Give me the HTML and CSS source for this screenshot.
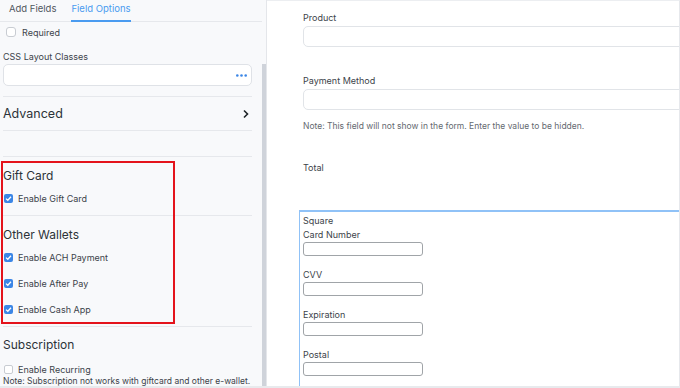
FILE: index.html
```html
<!DOCTYPE html>
<html lang="en">

<head>
    <meta charset="UTF-8">
    <meta name="viewport" content="width=device-width, initial-scale=1.0">
    <title>Field Options</title>
    <link rel="stylesheet" href="styles.css">
</head>

<body>
    <div class="editor">
        <!-- Sidebar -->
        <aside class="sidebar">
            <div class="sidebar-inner">
                <div class="tabs">
                    <span class="tab">Add Fields</span>
                    <span class="tab active">Field Options</span>
                </div>

                <label class="check-row required-row">
                    <span class="box"></span> Required
                </label>

                <div class="field-label">CSS Layout Classes</div>
                <div class="text-input">
                    <svg class="dots" width="11" height="3" viewBox="0 0 11 3">
                        <circle cx="1.3" cy="1.5" r="1.3" fill="#3b86e6" />
                        <circle cx="5.5" cy="1.5" r="1.3" fill="#3b86e6" />
                        <circle cx="9.7" cy="1.5" r="1.3" fill="#3b86e6" />
                    </svg>
                </div>

                <div class="divider first"></div>
                <div class="advanced">
                    <span>Advanced</span>
                    <svg width="8" height="10" viewBox="0 0 8 10">
                        <path d="M2 1.5 L5.5 5 L2 8.5" fill="none" stroke="#1d2327" stroke-width="1.6" />
                    </svg>
                </div>
                <div class="divider"></div>
                <div class="spacer"></div>
                <div class="divider"></div>

                <section class="group">
                    <h3>Gift Card</h3>
                    <label class="check-row"><span class="box checked"></span> Enable Gift Card</label>
                </section>
                <div class="divider"></div>

                <section class="group">
                    <h3>Other Wallets</h3>
                    <label class="check-row"><span class="box checked"></span> Enable ACH Payment</label>
                    <label class="check-row"><span class="box checked"></span> Enable After Pay</label>
                    <label class="check-row"><span class="box checked"></span> Enable Cash App</label>
                </section>
                <div class="divider"></div>

                <section class="group sub">
                    <h3>Subscription</h3>
                    <label class="check-row recurring"><span class="box"></span> Enable Recurring</label>
                    <p class="note">Note: Subscription not works with giftcard and other e-wallet.</p>
                </section>

                <!-- highlight annotation -->
                <div class="highlight"></div>
            </div>
            <div class="scrollbar"><div class="thumb"></div></div>
        </aside>

        <!-- Form preview -->
        <main class="preview">
            <div class="form-field">
                <div class="form-label">Product</div>
                <div class="wide-input"></div>
            </div>
            <div class="form-field">
                <div class="form-label">Payment Method</div>
                <div class="wide-input"></div>
                <p class="form-note">Note: This field will not show in the form. Enter the value to be hidden.</p>
            </div>
            <div class="form-field total">
                <div class="form-label">Total</div>
            </div>

            <div class="square">
                <div class="form-label">Square</div>
                <div class="card-label first">Card Number</div>
                <div class="small-input"></div>
                <div class="card-label">CVV</div>
                <div class="small-input"></div>
                <div class="card-label">Expiration</div>
                <div class="small-input"></div>
                <div class="card-label">Postal</div>
                <div class="small-input"></div>
            </div>
        </main>
    </div>
    <div class="bottom-bar"></div>
</body>

</html>
```

FILE: styles.css
```css
/* General */
body {
    margin: 0;
    padding: 0;
    font-family: Inter, "Noto Sans", Arial, sans-serif;
    color: #3c434a;
    height: 388px;
    overflow: hidden;
    background: #fff;
}

.editor {
    display: flex;
    height: 386px;
}

/* Sidebar */
.sidebar {
    display: flex;
    width: 266px;
    flex-shrink: 0;
    background-color: #f8f9fb;
    border-right: 1px solid #e4e6ea;
}

.sidebar-inner {
    position: relative;
    flex: 1;
    padding: 0 10px 0 3px;
}

.scrollbar {
    width: 4px;
    padding-top: 64px;
}

.scrollbar .thumb {
    height: 100%;
    background-color: #cfd3da;
}

/* Tabs */
.tabs {
    display: flex;
    gap: 15px;
    height: 21px;
    margin: 0 -10px 0 -3px;
    padding-left: 9px;
    border-bottom: 1px solid #e6e8ec;
}

.tab {
    font-size: 9.5px;
    line-height: 13px;
    padding-top: 2px;
    color: #50575e;
}

.tab.active {
    color: #4a9bf0;
    border-bottom: 2px solid #4a9bf0;
    margin-bottom: -1px;
}

/* Checkboxes */
.check-row {
    display: flex;
    align-items: center;
    gap: 5px;
    height: 26px;
    font-size: 9px;
    color: #3c434a;
}

.box {
    width: 9px;
    height: 9px;
    border-radius: 2px;
    border: 1px solid #c8ccd2;
    background: #fff;
    box-sizing: border-box;
    margin-left: 1px;
    flex-shrink: 0;
}

.box.checked {
    border: none;
    background: #3b86e6 url("data:image/svg+xml,%3Csvg xmlns='http://www.w3.org/2000/svg' viewBox='0 0 9 9'%3E%3Cpath d='M2 4.6 L3.8 6.3 L7 2.8' fill='none' stroke='white' stroke-width='1.3'/%3E%3C/svg%3E") center / 9px 9px no-repeat;
}

.required-row {
    height: 20px;
    padding-left: 2px;
    gap: 6px;
}

.required-row .box {
    width: 10px;
    height: 10px;
    border-radius: 3px;
}

/* CSS classes input */
.field-label {
    font-size: 9px;
    line-height: 12px;
    padding-top: 9px;
    height: 13px;
}

.text-input {
    height: 22px;
    box-sizing: border-box;
    border: 1px solid #dfe2e7;
    border-radius: 5px;
    background: #fff;
    display: flex;
    align-items: center;
    justify-content: flex-end;
    padding-right: 4px;
}

.divider {
    height: 1px;
    background-color: #e6e8ec;
}

.divider.first {
    margin-top: 10px;
}

.advanced {
    display: flex;
    align-items: center;
    justify-content: space-between;
    height: 33px;
    padding-right: 2px;
    font-size: 12.5px;
    color: #2c3338;
}

.spacer {
    height: 25px;
}

/* Groups */
.group {
    padding: 6px 0 4px;
}

.group h3 {
    margin: 0;
    height: 22px;
    line-height: 26px;
    font-size: 12px;
    font-weight: 400;
    color: #2c3338;
}

.group.sub {
    padding-top: 5px;
}

.group .recurring {
    height: 14px;
    margin-top: 8px;
}

.note {
    margin: 0;
    font-size: 8.5px;
    line-height: 11px;
    color: #3c434a;
    white-space: nowrap;
}

/* Red annotation box */
.highlight {
    position: absolute;
    left: 1px;
    top: 161px;
    width: 174px;
    height: 163px;
    box-sizing: border-box;
    border: 2px solid #e4131b;
}

/* Preview */
.preview {
    flex: 1;
    overflow: hidden;
    border-top: 1px solid #eceef1;
    border-right: 1px solid #e6e8ec;
    padding-left: 36px;
}

.form-label {
    font-size: 9px;
    line-height: 12px;
    color: #3c434a;
}

.form-field {
    padding-top: 11px;
}

.form-field + .form-field {
    padding-top: 28px;
}

.wide-input {
    width: 500px;
    height: 21px;
    margin-top: 2px;
    box-sizing: border-box;
    border: 1px solid #e1e4e8;
    border-radius: 5px;
}

.form-note {
    margin: 10px 0 0;
    font-size: 8.5px;
    line-height: 12px;
    color: #646970;
}

.form-field.total {
    padding-top: 30px;
}

/* Square card block */
.square {
    margin: 36px 0 0 -4px;
    padding-left: 3px;
    padding-top: 3px;
    width: 500px;
    height: 200px;
    border-top: 2px solid #90c2f7;
    border-left: 1px solid #90c2f7;
}

.card-label {
    font-size: 9px;
    line-height: 12px;
    margin-top: 13px;
}

.card-label.first {
    margin-top: 2px;
}

.small-input {
    width: 120px;
    height: 14px;
    margin-top: 1px;
    box-sizing: border-box;
    border: 1px solid #a0a4a8;
    border-radius: 3px;
}

.bottom-bar {
    height: 2px;
    background-color: #e8eaed;
}
```
